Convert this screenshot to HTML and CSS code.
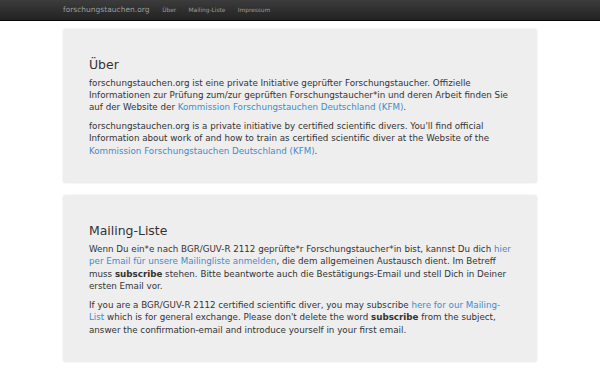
FILE: index.html
```html
<!DOCTYPE html>
<html lang="de">
  <head>
    <meta charset="utf-8" />
    <meta name="viewport" content="width=device-width, initial-scale=1" />
    <title>forschungstauchen.org</title>
    <link rel="stylesheet" href="styles.css">
  </head>
  <body>
    <nav class="navbar">
      <div class="container nav-inner">
        <a class="brand" href="#">forschungstauchen.org</a>
        <ul class="nav-links">
          <li><a href="#ueber">Über</a></li>
          <li><a href="#mailing">Mailing-Liste</a></li>
          <li><a href="#impressum">Impressum</a></li>
        </ul>
      </div>
    </nav>

    <main class="container">
      <section class="jumbotron" id="ueber">
        <h2>Über</h2>
        <p>
          forschungstauchen.org ist eine private Initiative geprüfter
          Forschungstaucher. Offizielle Informationen zur Prüfung zum/zur
          geprüften Forschungstaucher*in und deren Arbeit finden Sie auf der
          Website der
          <a href="#">Kommission Forschungstauchen Deutschland (KFM)</a>.
        </p>
        <p>
          forschungstauchen.org is a private initiative by certified scientific
          divers. You'll find official Information about work of and how to
          train as certified scientific diver at the Website of the
          <a href="#">Kommission Forschungstauchen Deutschland (KFM)</a>.
        </p>
      </section>

      <section class="jumbotron" id="mailing">
        <h2>Mailing-Liste</h2>
        <p>
          Wenn Du ein*e nach BGR/GUV-R 2112 geprüfte*r Forschungstaucher*in
          bist, kannst Du dich
          <a href="#">hier per Email für unsere Mailingliste anmelden</a>, die
          dem allgemeinen Austausch dient. Im Betreff muss
          <strong>subscribe</strong> stehen. Bitte beantworte auch die
          Bestätigungs-Email und stell Dich in Deiner ersten Email vor.
        </p>
        <p>
          If you are a BGR/GUV-R 2112 certified scientific diver, you may
          subscribe <a href="#">here for our Mailing-List</a> which is for
          general exchange. Please don't delete the word
          <strong>subscribe</strong> from the subject, answer the
          confirmation-email and introduce yourself in your first email.
        </p>
      </section>
    </main>
  </body>
</html>
```

FILE: styles.css
```css
html,
body {
  margin: 0;
  padding: 0;
}

body {
  background-color: white;
  color: #333;
  font-family: "DejaVu Sans", sans-serif;
  font-size: 8.72px;
  line-height: 12.4px;
}

a {
  color: #428bca;
  text-decoration: none;
}

.container {
  width: 474px;
  margin: 0 auto;
}

.navbar {
  height: 20px;
  background-image: linear-gradient(#3c3c3c, #222);
  border-bottom: 1px solid #080808;
  margin-bottom: 8px;
}

.nav-inner {
  display: flex;
  align-items: center;
  height: 20px;
}

.brand {
  color: #9d9d9d;
  font-size: 7.5px;
  padding-right: 6.5px;
}

.nav-links {
  display: flex;
  list-style: none;
  margin: 0;
  padding: 0;
}

.nav-links a {
  display: block;
  color: #9d9d9d;
  font-size: 5.85px;
  padding: 0 6.2px;
}

.jumbotron {
  background-color: #eee;
  border-radius: 3px;
  box-shadow: 0 0 2px rgba(0, 0, 0, 0.12);
  padding: 21px 23px 20px 26px;
  margin-bottom: 12px;
}

.jumbotron h2 {
  font-size: 12.45px;
  font-weight: normal;
  line-height: 13.6px;
  margin: 8px 0 5px;
}

.jumbotron p {
  margin: 0 0 6.2px;
}
```
